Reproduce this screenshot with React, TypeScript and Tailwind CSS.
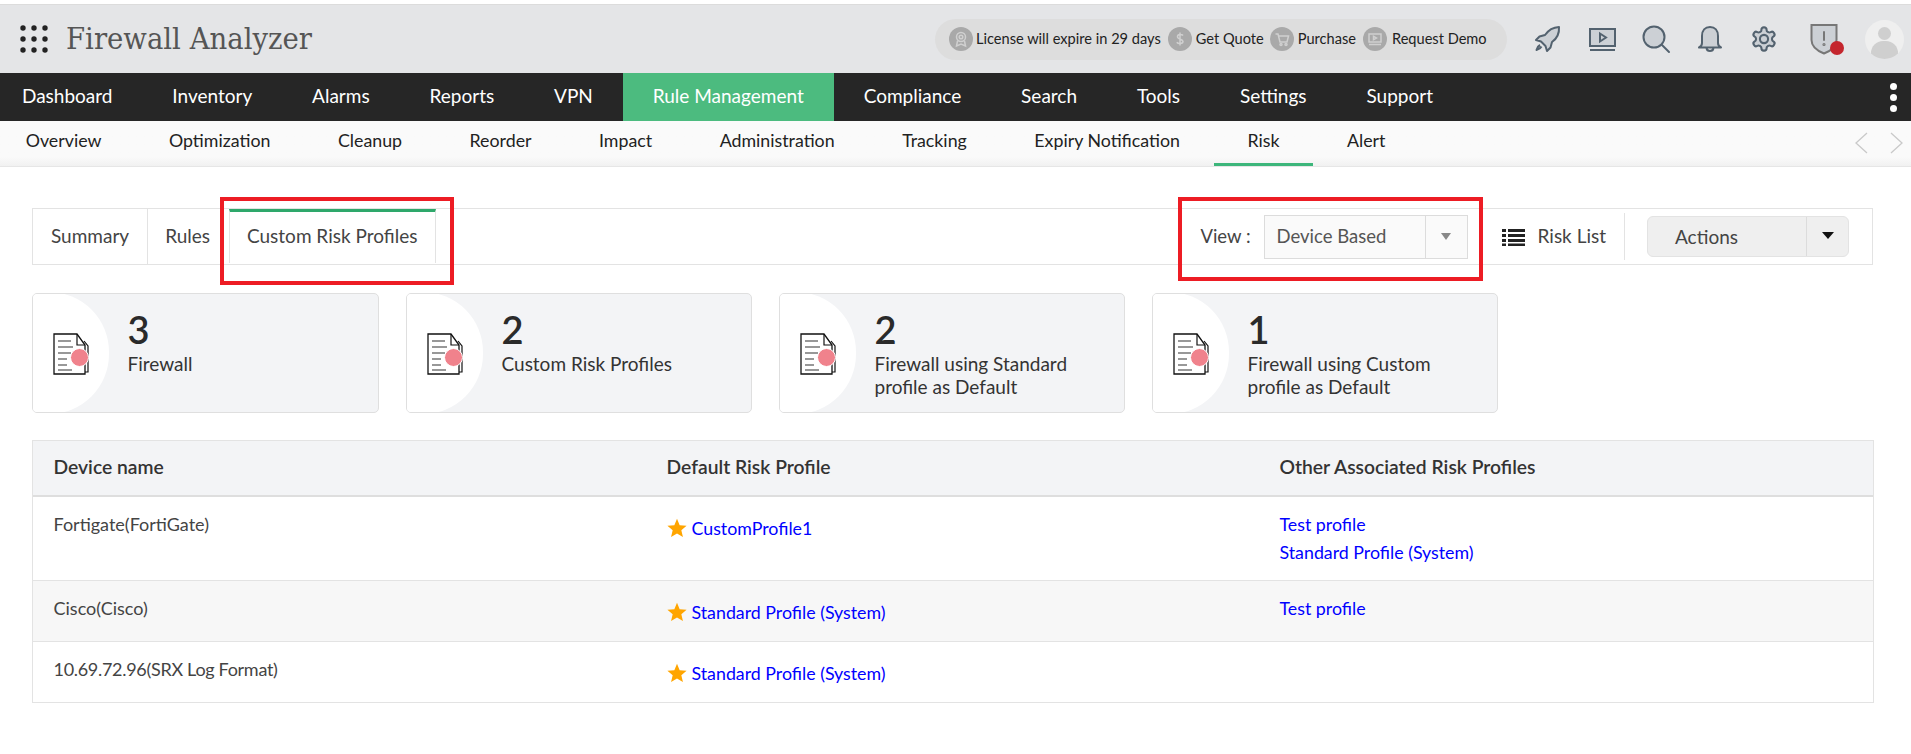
import React from "react";

const navItems = ["Dashboard", "Inventory", "Alarms", "Reports", "VPN", "Rule Management", "Compliance", "Search", "Tools", "Settings", "Support"];
const subItems = ["Overview", "Optimization", "Cleanup", "Reorder", "Impact", "Administration", "Tracking", "Expiry Notification", "Risk", "Alert"];

function DocIcon() {
  return (
    <svg width="36" height="42" viewBox="0 0 36 42" className="block">
      <path d="M31 8 L35 13 V39 H31" fill="#fff" stroke="#111" strokeWidth="1.2" />
      <path d="M1 1 H24 L32 12 V41 H1 Z" fill="#fff" stroke="#111" strokeWidth="1.3" />
      <path d="M24 1 V12 H32" fill="none" stroke="#111" strokeWidth="1.2" />
      <path d="M5 8 H18 M5 14 H20 M5 20 H18 M5 26 H14 M5 32 H14 M5 37 H19" stroke="#333" strokeWidth="1.1" />
      <circle cx="26.5" cy="24.5" r="9" fill="#f0828c" stroke="#fff" strokeWidth="1" />
    </svg>
  );
}

function Card({ num, lines, width }: { num: string; lines: string[]; width: string }) {
  return (
    <div className={`relative h-[120px] shrink-0 overflow-hidden rounded-[5px] border border-[#dfdfdf] bg-[#f3f4f6] ${width}`}>
      <div className="absolute left-[-44px] top-[-2px] h-[122px] w-[120px] rounded-full bg-white" />
      <div className="absolute left-[19.500px] top-[39px]"><DocIcon /></div>
      <div className="relative ml-[94.500px] pt-[13px] text-[#333]">
        <div className="text-[38px] font-semibold leading-[45px] text-[#2a2a2a]">{num}</div>
        <div className="text-[19px] leading-[23px]">
          {lines.map((l) => <div key={l} className="whitespace-nowrap">{l}</div>)}
        </div>
      </div>
    </div>
  );
}

function Star() {
  return (
    <svg width="20" height="20" viewBox="0 0 24 24" className="mr-[5px] shrink-0">
      <path d="M12 1l3.2 7.6 8.3.7-6.3 5.4 1.9 8.1L12 18.500l-7.100 4.300 1.900-8.100L.5 9.300l8.300-.7z" fill="#ffa500" />
    </svg>
  );
}

function Link({ children }: { children: React.ReactNode }) {
  return <span className="text-[17.800px] leading-[28px] whitespace-nowrap text-[#0000ff]">{children}</span>;
}

function Default({ name }: { name: string }) {
  return (
    <div className="flex items-center pt-[17px]">
      <Star />
      <Link>{name}</Link>
    </div>
  );
}

function PillIcon({ children }: { children: React.ReactNode }) {
  return (
    <span className="flex h-[24px] w-[24px] shrink-0 items-center justify-center rounded-full bg-[#a9a9a9]">
      <svg width="18" height="18" viewBox="0 0 18 18" fill="none" stroke="#d0d0d0" strokeWidth="1.5">{children}</svg>
    </span>
  );
}

const iconCls = "shrink-0";
const S = "#53626f";

export default function App() {
  return (
    <div className="min-h-[754px] w-[1911px] overflow-hidden bg-white font-['Lato',sans-serif] text-[#333]">
      {/* top strip */}
      <div className="h-[5px] border-b border-[#dcdcdc] bg-white" />

      {/* header */}
      <div className="flex h-[68px] items-center bg-[#e4e5e7]">
        <svg width="28" height="28" viewBox="0 0 28 28" className="ml-[20px] shrink-0" fill="#222">
          {[3, 14, 25].map((y) => [3, 14, 25].map((x) => <circle key={`${x}-${y}`} cx={x} cy={y} r="2.700" />))}
        </svg>
        <div className="ml-[18px] font-['DejaVu_Serif',serif] text-[30.600px] font-light tracking-[0px] text-[#555] [font-stretch:condensed]">Firewall Analyzer</div>

        <div className="ml-auto flex h-[41px] w-[572px] items-center rounded-full bg-[#dddddd] pl-[14px] text-[14.600px] text-[#222]">
          <PillIcon>
            <circle cx="9" cy="7" r="4.500" /><circle cx="9" cy="7" r="1.800" /><path d="M5.500 11 L4.500 16 L9 14 L13.500 16 L12.500 11" />
          </PillIcon>
          <span className="ml-[3px] whitespace-nowrap">License will expire in 29 days</span>
          <span className="ml-[7px]"><PillIcon><path d="M12 5.500c-1-1.300-5.500-1.700-5.500 1.200S12 9 12 11.500s-5 2.500-6.200.8M9 2.500v13" /></PillIcon></span>
          <span className="ml-[4px] whitespace-nowrap">Get Quote</span>
          <span className="ml-[6px]"><PillIcon><path d="M2.500 4h2.500l2 8h7l1.500-6H6" /><circle cx="8" cy="14.500" r="1" /><circle cx="13" cy="14.500" r="1" /></PillIcon></span>
          <span className="ml-[4px] whitespace-nowrap">Purchase</span>
          <span className="ml-[7px]"><PillIcon><rect x="3" y="4" width="12" height="8" /><path d="M7.500 6.200v3.600L10.500 8z" /><path d="M3 14.500h12" /></PillIcon></span>
          <span className="ml-[5px] whitespace-nowrap">Request Demo</span>
        </div>

        <div className="ml-[25px] flex items-center">
          <svg width="32" height="32" viewBox="0 0 32 32" fill="#ccd0d5" stroke={S} strokeWidth="2" strokeLinejoin="round" className={iconCls}>
            <path d="M27 4c-6 .3-10.500 3-14 8l-5.500 1.500L4 17l5 1.500 4.500 4.500L15 28l3.500-3.500L20 19c5-3.500 7.500-8 7-15z" />
            <path d="M8 22c-2 1-3 3-3.500 5 2-.5 4-1.500 5-3.500" fill="none" />
          </svg>
          <svg width="30" height="32" viewBox="0 0 30 32" fill="#ccd0d5" stroke={S} strokeWidth="2" className={`ml-[24px] ${iconCls}`}>
            <rect x="2" y="6" width="25" height="17" />
            <path d="M12 10.500v8l6-4z" fill="none" />
            <path d="M2 27h25" fill="none" />
          </svg>
          <svg width="30" height="32" viewBox="0 0 30 32" fill="#ccd0d5" stroke={S} strokeWidth="2" className={`ml-[23px] ${iconCls}`}>
            <circle cx="13" cy="14" r="10.500" />
            <path d="M21 22l7 7" fill="none" strokeLinecap="round" />
          </svg>
          <svg width="26" height="32" viewBox="0 0 26 32" fill="#ccd0d5" stroke={S} strokeWidth="2" strokeLinejoin="round" className={`ml-[26px] ${iconCls}`}>
            <path d="M13 4c-5 0-8 3.500-8 9v7c0 2-1 3.500-3 4.500h22c-2-1-3-2.500-3-4.500v-7c0-5.500-3-9-8-9z" />
            <path d="M9.500 25c.3 2 1.700 3 3.500 3s3.200-1 3.500-3" fill="none" />
          </svg>
          <svg width="28" height="28" viewBox="0 0 24 24" fill="#ccd0d5" stroke={S} strokeWidth="1.800" className={`ml-[27px] ${iconCls}`}>
            <path d="M12.220 2h-.44a2 2 0 0 0-2 2v.18a2 2 0 0 1-1 1.730l-.43.25a2 2 0 0 1-2 0l-.15-.08a2 2 0 0 0-2.730.73l-.22.38a2 2 0 0 0 .73 2.730l.15.1a2 2 0 0 1 1 1.720v.51a2 2 0 0 1-1 1.740l-.15.09a2 2 0 0 0-.73 2.730l.22.38a2 2 0 0 0 2.730.73l.15-.08a2 2 0 0 1 2 0l.43.25a2 2 0 0 1 1 1.730V20a2 2 0 0 0 2 2h.44a2 2 0 0 0 2-2v-.18a2 2 0 0 1 1-1.730l.43-.25a2 2 0 0 1 2 0l.15.08a2 2 0 0 0 2.730-.73l.22-.39a2 2 0 0 0-.73-2.730l-.15-.08a2 2 0 0 1-1-1.740v-.5a2 2 0 0 1 1-1.740l.15-.09a2 2 0 0 0 .73-2.730l-.22-.38a2 2 0 0 0-2.730-.73l-.15.08a2 2 0 0 1-2 0l-.43-.25a2 2 0 0 1-1-1.730V4a2 2 0 0 0-2-2z" />
            <circle cx="12" cy="12" r="3.500" />
          </svg>
          <div className="relative ml-[32px] h-[32px] w-[28px] shrink-0">
            <svg width="28" height="32" viewBox="0 0 28 32" fill="#ccd0d5" stroke="#777" strokeWidth="2">
              <path d="M1.500 2h25v15c0 6-5 10.500-12.500 13.500C6.500 27.500 1.500 23 1.500 17z" />
              <path d="M14 9v8" fill="none" strokeLinecap="round" />
              <circle cx="14" cy="21.500" r=".6" />
            </svg>
            <span className="absolute left-[20px] top-[18px] h-[14px] w-[14px] rounded-full bg-[#c4262e]" />
          </div>
          <div className="relative ml-[27px] mr-[7px] h-[39px] w-[39px] shrink-0 overflow-hidden rounded-full bg-[#efefef]">
            <span className="absolute left-[13px] top-[7px] h-[13px] w-[13px] rounded-full bg-[#cfcfcf]" />
            <span className="absolute left-[6px] top-[21px] h-[24px] w-[27px] rounded-full bg-[#cfcfcf]" />
          </div>
        </div>
      </div>

      {/* main nav */}
      <div className="relative flex h-[48px] items-stretch bg-[#262626] text-[19px] text-white">
        <div className="ml-[-8px] flex items-stretch pb-[2px]">
          {navItems.map((n) => (
            <div key={n} className={`mb-[-2px] flex items-center whitespace-nowrap px-[29.950px] pb-[2px] ${n === "Rule Management" ? "bg-[#4cbb7f]" : ""}`}>{n}</div>
          ))}
        </div>
        <div className="ml-auto mr-[14px] flex flex-col items-center justify-center gap-[4px]">
          <span className="h-[7px] w-[7px] rounded-full bg-white" />
          <span className="h-[7px] w-[7px] rounded-full bg-white" />
          <span className="h-[7px] w-[7px] rounded-full bg-white" />
        </div>
      </div>

      {/* sub nav */}
      <div className="flex h-[46px] items-stretch border-b border-[#e6e6e6] bg-gradient-to-b from-[#fafafa] from-80% to-[#f1f1f1] text-[17.800px] text-[#222]">
        <div className="ml-[-8px] flex items-stretch">
          {subItems.map((n) => (
            <div key={n} className={`flex items-start whitespace-nowrap border-b-[3px] px-[33.750px] pt-[6px] ${n === "Risk" ? "border-[#3db67b]" : "border-transparent"}`}>{n}</div>
          ))}
        </div>
        <div className="ml-auto mr-[7px] flex items-center gap-[22px] pb-[2px]">
          <svg width="14" height="22" viewBox="0 0 14 22" fill="none" stroke="#c9c9c9" strokeWidth="1.300"><path d="M13 1L2 11l11 10" /></svg>
          <svg width="14" height="22" viewBox="0 0 14 22" fill="none" stroke="#c9c9c9" strokeWidth="1.300"><path d="M1 1l11 10L1 21" /></svg>
        </div>
      </div>

      {/* content */}
      <div className="px-[32px] pt-[41px]">
        {/* tab bar */}
        <div className="relative flex h-[57px] w-[1841px] items-stretch border border-[#e3e3e3] text-[19px] text-[#444]">
          <div className="flex items-center whitespace-nowrap border-r border-[#e3e3e3] pl-[18px] pr-[18px]">Summary</div>
          <div className="flex items-center whitespace-nowrap pl-[17px] pr-[19px]">Rules</div>
          <div className="mb-[1px] flex items-center whitespace-nowrap border-x border-t-[3px] border-x-[#e3e3e3] border-t-[#2ea86b] pb-[3px] pl-[17px] pr-[18px]">Custom Risk Profiles</div>
          <span className="pointer-events-none absolute left-[187px] top-[-12px] h-[88px] w-[234px] border-[4px] border-[#ed1c24]" />

          <div className="ml-auto flex items-center">
            <span className="mr-[13px] whitespace-nowrap text-[18.500px]">View :</span>
            <div className="flex h-[44px] w-[204px] items-center border border-[#dcdcdc] bg-[#fafafa]">
              <span className="flex-1 pl-[12px] text-[18.500px] text-[#555]">Device Based</span>
              <span className="flex h-full w-[42px] items-center justify-center border-l border-[#dcdcdc]">
                <span className="h-0 w-0 border-x-[5px] border-t-[7px] border-x-transparent border-t-[#888]" />
              </span>
            </div>
            <span className="pointer-events-none absolute left-[1145px] top-[-12px] h-[84px] w-[305px] border-[4px] border-[#ed1c24]" />
            <div className="ml-[14px] flex h-[47px] items-center border-x border-[#e3e3e3] pl-[19px] pr-[18px]">
              <svg width="23" height="18" viewBox="0 0 23 18" fill="#222" className="mr-[13px]">
                <rect x="0" y="1" width="4" height="3" /><rect x="6" y="1" width="17" height="3" />
                <rect x="0" y="6" width="4" height="3" /><rect x="6" y="6" width="17" height="3" />
                <rect x="0" y="11" width="4" height="3" /><rect x="6" y="11" width="17" height="3" />
                <rect x="0" y="15.500" width="4" height="2.500" /><rect x="6" y="15.500" width="17" height="2.500" />
              </svg>
              <span className="whitespace-nowrap">Risk List</span>
            </div>
            <div className="ml-[22px] mr-[23px] flex h-[41px] w-[202px] items-stretch rounded-[6px] border border-[#e3e3e3] bg-[#efefef]">
              <span className="flex flex-1 items-center pl-[27px] pt-[2px]">Actions</span>
              <span className="flex w-[42px] items-center justify-center border-l border-[#dcdcdc]">
                <span className="mb-[3px] h-0 w-0 border-x-[6px] border-t-[7px] border-x-transparent border-t-[#111]" />
              </span>
            </div>
          </div>
        </div>

        {/* cards */}
        <div className="mt-[28px] flex gap-[27px]">
          <Card num="3" lines={["Firewall"]} width="w-[347px]" />
          <Card num="2" lines={["Custom Risk Profiles"]} width="w-[346px]" />
          <Card num="2" lines={["Firewall using Standard", "profile as Default"]} width="w-[346px]" />
          <Card num="1" lines={["Firewall using Custom", "profile as Default"]} width="w-[346px]" />
        </div>

        {/* table */}
        <div className="mt-[27px] w-[1842px] border-x border-b border-[#e3e3e3]">
          <div className="grid h-[57px] grid-cols-[613px_613px_1fr] items-center border-y border-b-[2px] border-t-[#e3e3e3] border-b-[#dedede] bg-[#f3f4f6] pb-[2px] text-[19.300px] font-semibold text-[#333]">
            <div className="pl-[20.500px]">Device name</div>
            <div className="pl-[20.500px]">Default Risk Profile</div>
            <div className="pl-[20.500px]">Other Associated Risk Profiles</div>
          </div>
          <div className="grid h-[84px] grid-cols-[613px_613px_1fr] border-b border-[#e3e3e3] text-[18px] text-[#444]">
            <div className="pl-[20.500px] pt-[14px]">Fortigate(FortiGate)</div>
            <div className="pl-[20.500px]"><Default name="CustomProfile1" /></div>
            <div className="flex flex-col pl-[20.500px] pt-[13px]">
              <Link>Test profile</Link>
              <Link>Standard Profile (System)</Link>
            </div>
          </div>
          <div className="grid h-[61px] grid-cols-[613px_613px_1fr] border-b border-[#e3e3e3] bg-[#f7f7f7] text-[18px] text-[#444]">
            <div className="pl-[20.500px] pt-[14px]">Cisco(Cisco)</div>
            <div className="pl-[20.500px]"><Default name="Standard Profile (System)" /></div>
            <div className="pl-[20.500px] pt-[13px]"><Link>Test profile</Link></div>
          </div>
          <div className="grid h-[60px] grid-cols-[613px_613px_1fr] text-[18px] text-[#444]">
            <div className="pl-[20.500px] pt-[14px] tracking-[-0.3px]">10.69.72.96(SRX Log Format)</div>
            <div className="pl-[20.500px]"><Default name="Standard Profile (System)" /></div>
            <div />
          </div>
        </div>
      </div>
    </div>
  );
}
